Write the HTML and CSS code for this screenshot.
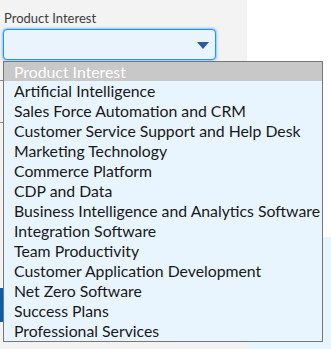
FILE: index.html
```html
<!DOCTYPE html>
<html lang="en">
<head>
    <meta charset="UTF-8">
    <meta name="viewport" content="width=device-width, initial-scale=1.0">
    <title>Product Interest</title>
    <link rel="stylesheet" href="styles.css">
</head>
<body>

    <div class="page">
        <!-- Form column -->
        <div class="form-panel">
            <div class="field">
                <label for="productInterest">Product Interest</label>
                <div class="select-box" id="productInterest">
                    <svg class="select-arrow" width="12" height="7" viewBox="0 0 12 7">
                        <path d="M0 0 H12 L6 7 Z" fill="#2b5a9e"/>
                    </svg>
                </div>
            </div>

            <!-- fields hidden behind the open list -->
            <div class="hidden-field"></div>
            <div class="hidden-button"></div>
        </div>

        <!-- Right column -->
        <div class="side-panel">
            <div class="side-card"></div>
        </div>

        <!-- Open option list -->
        <ul class="option-list">
            <li class="option selected">Product Interest</li>
            <li class="option">Artificial Intelligence</li>
            <li class="option">Sales Force Automation and CRM</li>
            <li class="option">Customer Service Support and Help Desk</li>
            <li class="option">Marketing Technology</li>
            <li class="option">Commerce Platform</li>
            <li class="option">CDP and Data</li>
            <li class="option">Business Intelligence and Analytics Software</li>
            <li class="option">Integration Software</li>
            <li class="option">Team Productivity</li>
            <li class="option">Customer Application Development</li>
            <li class="option">Net Zero Software</li>
            <li class="option">Success Plans</li>
            <li class="option">Professional Services</li>
        </ul>
    </div>

</body>
</html>
```

FILE: styles.css
```css
body {
    margin: 0;
    font-family: Lato, "Open Sans", sans-serif;
    background-color: #ffffff;
}

.page {
    position: relative;
    display: flex;
    height: 349px;
    overflow: hidden;
}

.form-panel {
    width: 247px;
    flex-shrink: 0;
    background-color: #f3f3f3;
    padding: 9px 0 0 0;
    box-sizing: border-box;
}

.field label {
    display: block;
    margin-left: 4px;
    font-size: 13px;
    line-height: 18px;
    color: #3e3e3c;
}

.select-box {
    margin: 2px 0 0 3px;
    width: 213px;
    height: 31px;
    box-sizing: border-box;
    border: 1px solid #1b96ff;
    border-radius: 4px;
    background-color: #eaf4fd;
    box-shadow: 0 0 3px #1b96ff;
    display: flex;
    align-items: center;
    justify-content: flex-end;
    padding-right: 6px;
}

.select-arrow {
    display: block;
    margin-top: 2px;
}

.hidden-field {
    margin: 20px 0 0 -10px;
    height: 41px;
    border-top: 1px solid #8a8a8a;
    border-bottom: 1px solid #8a8a8a;
    width: 200px;
}

.hidden-button {
    margin-top: 165px;
    width: 120px;
    height: 34px;
    background-color: #0b5cab;
}

.side-panel {
    flex: 1;
    display: flex;
    flex-direction: column;
    justify-content: flex-end;
}

.side-card {
    height: 112px;
    background-color: #e6f5fe;
    border-top-left-radius: 14px;
}

.option-list {
    position: absolute;
    left: 3px;
    top: 61px;
    width: 320px;
    box-sizing: border-box;
    margin: 0;
    padding: 0;
    list-style: none;
    border: 1px solid #767676;
    background-color: #e9f5fe;
}

.option {
    height: 20px;
    line-height: 20px;
    padding-left: 10px;
    font-size: 15.8px;
    color: #181818;
    white-space: nowrap;
}

.option.selected {
    height: 19px;
    line-height: 19px;
    background-color: #c8c8c8;
    color: #ffffff;
}
```
